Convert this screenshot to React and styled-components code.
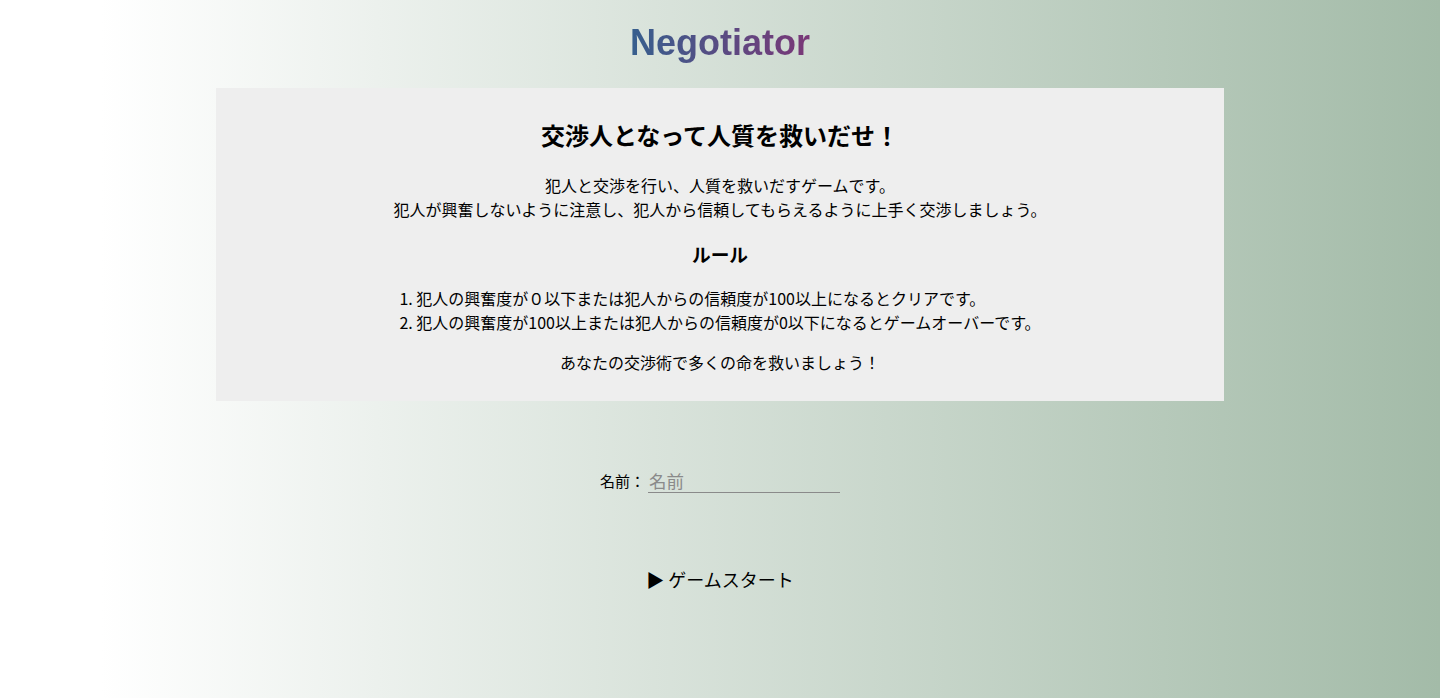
import React, { useState } from "react";
import styled, { createGlobalStyle } from "styled-components";

const GlobalStyle = createGlobalStyle`
  html, body {
    margin: 0;
    padding: 0;
  }
  body {
    min-height: 698px;
    background: linear-gradient(to right, #ffffff 7%, #a3bba8 100%);
    font-family: "Noto Sans CJK JP", "Liberation Sans", sans-serif;
    color: #000;
  }
`;

const Page = styled.div`
  display: flex;
  flex-direction: column;
  align-items: center;
  min-height: 698px;
  padding-top: 19px;
  box-sizing: border-box;
`;

const Logo = styled.h1`
  margin: 0;
  font-family: "Liberation Sans", Arial, sans-serif;
  font-weight: 700;
  font-size: 36px;
  line-height: 48px;
  background: linear-gradient(to right, #365f8e, #7a3777);
  -webkit-background-clip: text;
  background-clip: text;
  color: transparent;
`;

const Panel = styled.section`
  width: 1008px;
  margin-top: 21px;
  padding: 31px 0 27px;
  box-sizing: border-box;
  background: #eeeeee;
  text-align: center;
`;

const Heading = styled.h2`
  margin: 0;
  font-size: 24px;
  line-height: 32px;
  font-weight: 700;
`;

const Text = styled.p`
  margin: ${(p) => p.$top || 0}px 0 0;
  font-size: 16px;
  line-height: 24px;
`;

const SubHeading = styled.h3`
  margin: 20px 0 0;
  font-size: 18.72px;
  line-height: 26px;
  font-weight: 700;
`;

const Rules = styled.ol`
  display: inline-block;
  margin: 19px 0 0;
  padding: 0;
  text-align: left;
  list-style-position: inside;
  font-size: 16px;
  line-height: 24px;
`;

const Form = styled.div`
  display: flex;
  align-items: center;
  margin-top: 68px;
  font-size: 15px;
  line-height: 24px;
`;

const Input = styled.input`
  width: 190px;
  margin-left: 3px;
  padding: 0 1px;
  border: none;
  border-bottom: 1px solid #8a8a8a;
  background: transparent;
  font-family: inherit;
  font-size: 17.5px;
  line-height: 22px;
  outline: none;
  &::placeholder {
    color: #8a8a8a;
  }
`;

const StartButton = styled.button`
  margin-top: 71px;
  padding: 0;
  border: none;
  background: transparent;
  font-family: "Noto Sans CJK JP", "Liberation Sans", sans-serif;
  font-size: 18px;
  line-height: 30px;
  color: #000;
  cursor: pointer;
`;

export default function App() {
  const [name, setName] = useState("");
  return (
    <>
      <GlobalStyle />
      <Page>
        <Logo>Negotiator</Logo>
        <Panel>
          <Heading>交渉人となって人質を救いだせ！</Heading>
          <Text $top={22}>
            犯人と交渉を行い、人質を救いだすゲームです。
            <br />
            犯人が興奮しないように注意し、犯人から信頼してもらえるように上手く交渉しましょう。
          </Text>
          <SubHeading>ルール</SubHeading>
          <Rules>
            <li>犯人の興奮度が０以下または犯人からの信頼度が100以上になるとクリアです。</li>
            <li>犯人の興奮度が100以上または犯人からの信頼度が0以下になるとゲームオーバーです。</li>
          </Rules>
          <Text $top={16}>あなたの交渉術で多くの命を救いましょう！</Text>
        </Panel>
        <Form>
          <label htmlFor="name">名前：</label>
          <Input
            id="name"
            placeholder="名前"
            value={name}
            onChange={(e) => setName(e.target.value)}
          />
        </Form>
        <StartButton>▶ ゲームスタート</StartButton>
      </Page>
    </>
  );
}
